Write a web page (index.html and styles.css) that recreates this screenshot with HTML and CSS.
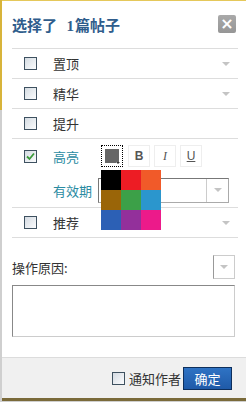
FILE: index.html
```html
<!DOCTYPE html>
<html lang="zh-CN">
<head>
    <meta charset="UTF-8">
    <title>选择了 1篇帖子</title>
    <link rel="stylesheet" href="styles.css">
</head>
<body>

<div class="dialog">
    <div class="head">
        <h3 class="title">选择了 <b>1</b>篇帖子</h3>
        <span class="close">&#215;</span>
    </div>

    <div class="row">
        <span class="chk"></span>
        <span class="label">置顶</span>
        <span class="arrow"></span>
    </div>
    <div class="row">
        <span class="chk"></span>
        <span class="label">精华</span>
        <span class="arrow"></span>
    </div>
    <div class="row">
        <span class="chk"></span>
        <span class="label">提升</span>
    </div>

    <div class="row hl">
        <div class="line">
            <span class="chk on">
                <svg width="11" height="11" viewBox="0 0 11 11"><path d="M2 5.5 L4.5 8 L9 2.5" fill="none" stroke="#3a9a3a" stroke-width="1.8"/></svg>
            </span>
            <span class="label teal">高亮</span>
            <div class="tools">
                <span class="tool color"><i class="sw"></i><i class="mini"></i></span>
                <span class="tool">B</span>
                <span class="tool it">I</span>
                <span class="tool ul">U</span>
            </div>
        </div>
        <div class="line second">
            <span class="label teal">有效期</span>
            <div class="sel">
                <span class="sel-btn"><span class="arrow"></span></span>
            </div>
        </div>
        <div class="palette">
            <i style="background:#000000"></i>
            <i style="background:#ed1c24"></i>
            <i style="background:#f15a29"></i>
            <i style="background:#9a6508"></i>
            <i style="background:#3ca048"></i>
            <i style="background:#2b96cd"></i>
            <i style="background:#2c60b5"></i>
            <i style="background:#93309b"></i>
            <i style="background:#ec1a8a"></i>
        </div>
    </div>

    <div class="row">
        <span class="chk"></span>
        <span class="label">推荐</span>
        <span class="arrow"></span>
    </div>

    <div class="reason">
        <div class="reason-top">
            <span>操作原因:</span>
            <span class="small-sel"><span class="arrow"></span></span>
        </div>
        <div class="area"></div>
    </div>

    <div class="foot">
        <span class="chk"></span>
        <span class="notify">通知作者</span>
        <button class="ok">确定</button>
    </div>
</div>

</body>
</html>
```

FILE: styles.css
```css
body {
    margin: 0;
    height: 402px;
    background: linear-gradient(to bottom, #d8b43a 0, #d8b43a 110px, #cfcfcf 110px);
    font-family: "Noto Sans CJK SC", "Noto Sans", sans-serif;
    font-size: 13px;
    color: #333;
    overflow: hidden;
}
.dialog {
    margin-left: 2px;
    padding-top: 1px;
    background: linear-gradient(to bottom, #e5c85a 0, #e5c85a 1px, #fff 1px);
    position: relative;
    border-bottom: 3px solid #7a6a3a;
    box-sizing: border-box;
    height: 401px;
}
.head {
    display: flex;
    align-items: center;
    justify-content: space-between;
    height: 47px;
    margin: 0 8px 0 10px;
    border-bottom: 1px solid #ddd;
}
.title {
    margin: 0;
    font-size: 15px;
    font-weight: bold;
    color: #2f5d8c;
}
.title b {
    font-family: "Liberation Serif", serif;
    margin-left: 6px;
    margin-right: 1px;
}
.close {
    width: 18px;
    height: 18px;
    margin-top: -2px;
    margin-right: 2px;
    background: linear-gradient(#a9a9a9, #969696);
    border-radius: 2px;
    color: #fff;
    font-family: "DejaVu Sans", sans-serif;
    font-weight: bold;
    font-size: 16px;
    line-height: 18px;
    text-align: center;
}
.row {
    display: flex;
    align-items: center;
    height: 29px;
    margin: 0 8px 0 10px;
    border-bottom: 1px solid #ddd;
    position: relative;
}
.chk {
    width: 11px;
    height: 11px;
    margin-left: 12px;
    border: 1px solid #3e5160;
    background: linear-gradient(135deg, #d4dbe2, #fbfcfd);
    flex: none;
    display: inline-flex;
    align-items: center;
    justify-content: center;
}
.chk svg { display: block; }
.label {
    margin-left: 16px;
    font-size: 13px;
    color: #333;
}
.teal { color: #2a8ba2; }
.arrow {
    width: 0;
    height: 0;
    border-left: 4px solid transparent;
    border-right: 4px solid transparent;
    border-top: 4px solid #c4c4c4;
    margin-left: auto;
    margin-right: 8px;
}
.hl {
    display: block;
    height: 68px;
}
.line {
    display: flex;
    align-items: center;
    height: 30px;
    padding-top: 2px;
}
.tools {
    display: flex;
    gap: 4px;
    margin-left: 22px;
}
.tool {
    width: 20px;
    height: 20px;
    border: 1px solid #eee;
    font-family: "Liberation Sans", sans-serif;
    font-weight: bold;
    font-size: 12px;
    color: #555;
    text-align: center;
    line-height: 20px;
    position: relative;
}
.it { font-style: italic; font-weight: normal; font-family: "Liberation Serif", serif; }
.ul { text-decoration: underline; font-weight: normal; }
.color {
    border: 1px dotted #000;
    margin-right: 1px;
}
.color .sw {
    position: absolute;
    left: 3px;
    top: 3px;
    width: 14px;
    height: 14px;
    background: #666;
}
.color .mini {
    position: absolute;
    right: 2px;
    bottom: 2px;
    border-left: 2px solid transparent;
    border-right: 2px solid transparent;
    border-top: 2px solid #333;
    background: #fff;
}
.second {
    height: 30px;
    padding-top: 4px;
}
.second .label {
    margin-left: 41px;
}
.sel {
    margin-left: 6px;
    width: 131px;
    height: 25px;
    border: 1px solid #aaa;
    border-top-color: #777;
    border-left-color: #777;
    box-sizing: border-box;
    display: flex;
    justify-content: flex-end;
}
.sel-btn {
    width: 21px;
    border-left: 1px solid #ccc;
    display: flex;
    align-items: center;
    justify-content: center;
}
.sel-btn .arrow { margin: 0; }
.palette {
    position: absolute;
    left: 89px;
    top: 31px;
    display: grid;
    grid-template-columns: repeat(3, 20px);
    grid-auto-rows: 20px;
}
.reason {
    margin: 0 11px 0 10px;
}
.reason-top {
    display: flex;
    align-items: center;
    justify-content: space-between;
    height: 26px;
    margin-top: 16px;
    font-size: 13px;
    color: #333;
}
.small-sel {
    width: 20px;
    height: 22px;
    border: 1px solid #ccc;
    border-left-color: #999;
    display: flex;
    align-items: center;
    justify-content: center;
}
.small-sel .arrow { margin: 0; }
.area {
    height: 50px;
    margin-top: 5px;
    border: 1px solid #ccc;
    border-left-color: #888;
    border-top-color: #888;
}
.foot {
    position: absolute;
    left: 0;
    right: 0;
    bottom: 0;
    height: 40px;
    background: #f0f0f0;
    border-top: 1px solid #dcdcdc;
    display: flex;
    align-items: center;
    justify-content: flex-end;
    padding-right: 14px;
}
.foot .chk { margin-left: 0; }
.notify {
    margin-left: 4px;
    font-size: 13px;
    color: #333;
}
.ok {
    margin-left: 2px;
    width: 49px;
    height: 23px;
    background: linear-gradient(#2f73c4, #1f5aa8);
    border: 1px solid #0e2f5c;
    color: #fff;
    font-family: "Noto Sans CJK SC", sans-serif;
    font-size: 13px;
    padding: 0;
}
```
